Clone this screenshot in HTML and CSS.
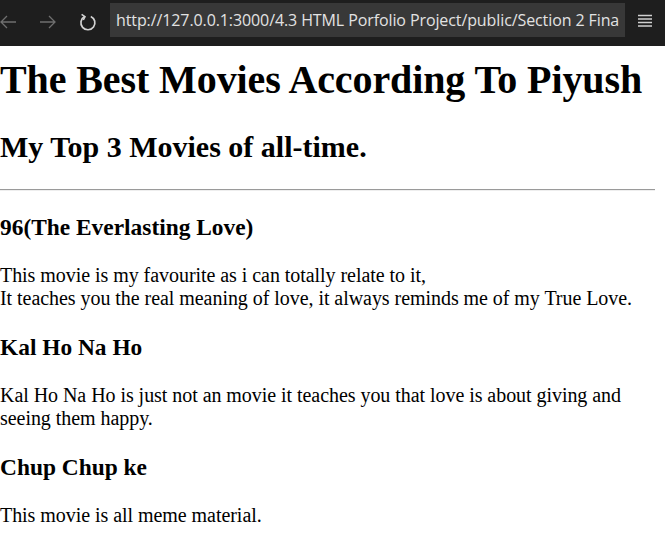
FILE: index.html
```html
<!DOCTYPE html>
<html lang="en">
<head>
<meta charset="utf-8">
<title>Piyush's Top Movies</title>
<link rel="stylesheet" href="styles.css">
</head>
<body>
<header class="toolbar">
  <div class="nav">
    <svg class="icon back" width="18" height="14" viewBox="0 0 18 14"><path d="M17 7H2M8 1L2 7l6 6" fill="none" stroke="currentColor" stroke-width="1.3"/></svg>
    <svg class="icon fwd" width="18" height="14" viewBox="0 0 18 14"><path d="M1 7h15M10 1l6 6-6 6" fill="none" stroke="currentColor" stroke-width="1.3"/></svg>
    <svg class="icon reload" width="18" height="20" viewBox="0 0 18 20"><path d="M5.6 4.6A7 7 0 1 0 11.8 4.4" fill="none" stroke="currentColor" stroke-width="1.7"/><path d="M2.6 2.4L6 4.7 4.3 8" fill="none" stroke="currentColor" stroke-width="1.6"/></svg>
  </div>
  <div class="url">http://127.0.0.1:3000/4.3 HTML Porfolio Project/public/Section 2 Fina</div>
  <svg class="icon menu" width="16" height="14" viewBox="0 0 16 14"><path d="M1 1.5h14M1 5h14M1 8.5h14M1 12h14" stroke="currentColor" stroke-width="1.3"/></svg>
</header>
<main class="page">
  <h1>The Best Movies According To Piyush</h1>
  <h2>My Top 3 Movies of all-time.</h2>
  <hr>
  <h3>96(The Everlasting Love)</h3>
  <p>This movie is my favourite as i can totally relate to it,<br>It teaches you the real meaning of love, it always reminds me of my True Love.</p>
  <h3>Kal Ho Na Ho</h3>
  <p>Kal Ho Na Ho is just not an movie it teaches you that love is about giving and seeing them happy.</p>
  <h3>Chup Chup ke</h3>
  <p>This movie is all meme material.</p>
</main>
</body>
</html>
```
FILE: styles.css
```css
html, body {
  margin: 0;
  padding: 0;
  background: #ffffff;
  overflow: hidden;
}
.toolbar {
  height: 46px;
  background: #1e1e1e;
  display: flex;
  align-items: center;
  box-sizing: border-box;
}
.nav {
  display: flex;
  align-items: center;
  width: 110px;
  flex: none;
}
.icon { display: block; flex: none; }
.back { color: #6f6f6f; margin-left: -1px; margin-top: -2px; }
.fwd { color: #6f6f6f; margin-left: 22px; margin-top: -2px; }
.reload { color: #d2d2d2; margin-left: 22px; margin-top: -2px; }
.url {
  width: 515px;
  height: 34px;
  margin-top: -6px;
  background: #383838;
  color: #e2e2e2;
  font-family: "Open Sans", "Noto Sans", sans-serif;
  font-size: 16px;
  line-height: 34px;
  padding-left: 6px;
  box-sizing: border-box;
  white-space: nowrap;
  overflow: hidden;
  letter-spacing: -0.1px;
  flex: none;
}
.menu { color: #d0d0d0; margin-left: 12px; margin-top: -4px; }
.page {
  font-family: "Liberation Serif", "Times New Roman", serif;
  font-size: 20px;
  color: #000;
  padding: 0 10px 0 0;
  display: flow-root;
}
h1 {
  font-size: 40px;
  margin: 10px 0 26.8px;
  letter-spacing: -0.1px;
}
h2 {
  font-size: 30px;
  margin: 24.9px 0;
}
hr {
  margin: 10px 0;
  border: none;
  border-top: 1px solid #9a9a9a;
  border-bottom: 1px solid #eeeeee;
}
h3 {
  font-size: 23.4px;
  margin: 23.4px 0;
}
p {
  margin: 20px 0;
  letter-spacing: -0.05px;
}
```
